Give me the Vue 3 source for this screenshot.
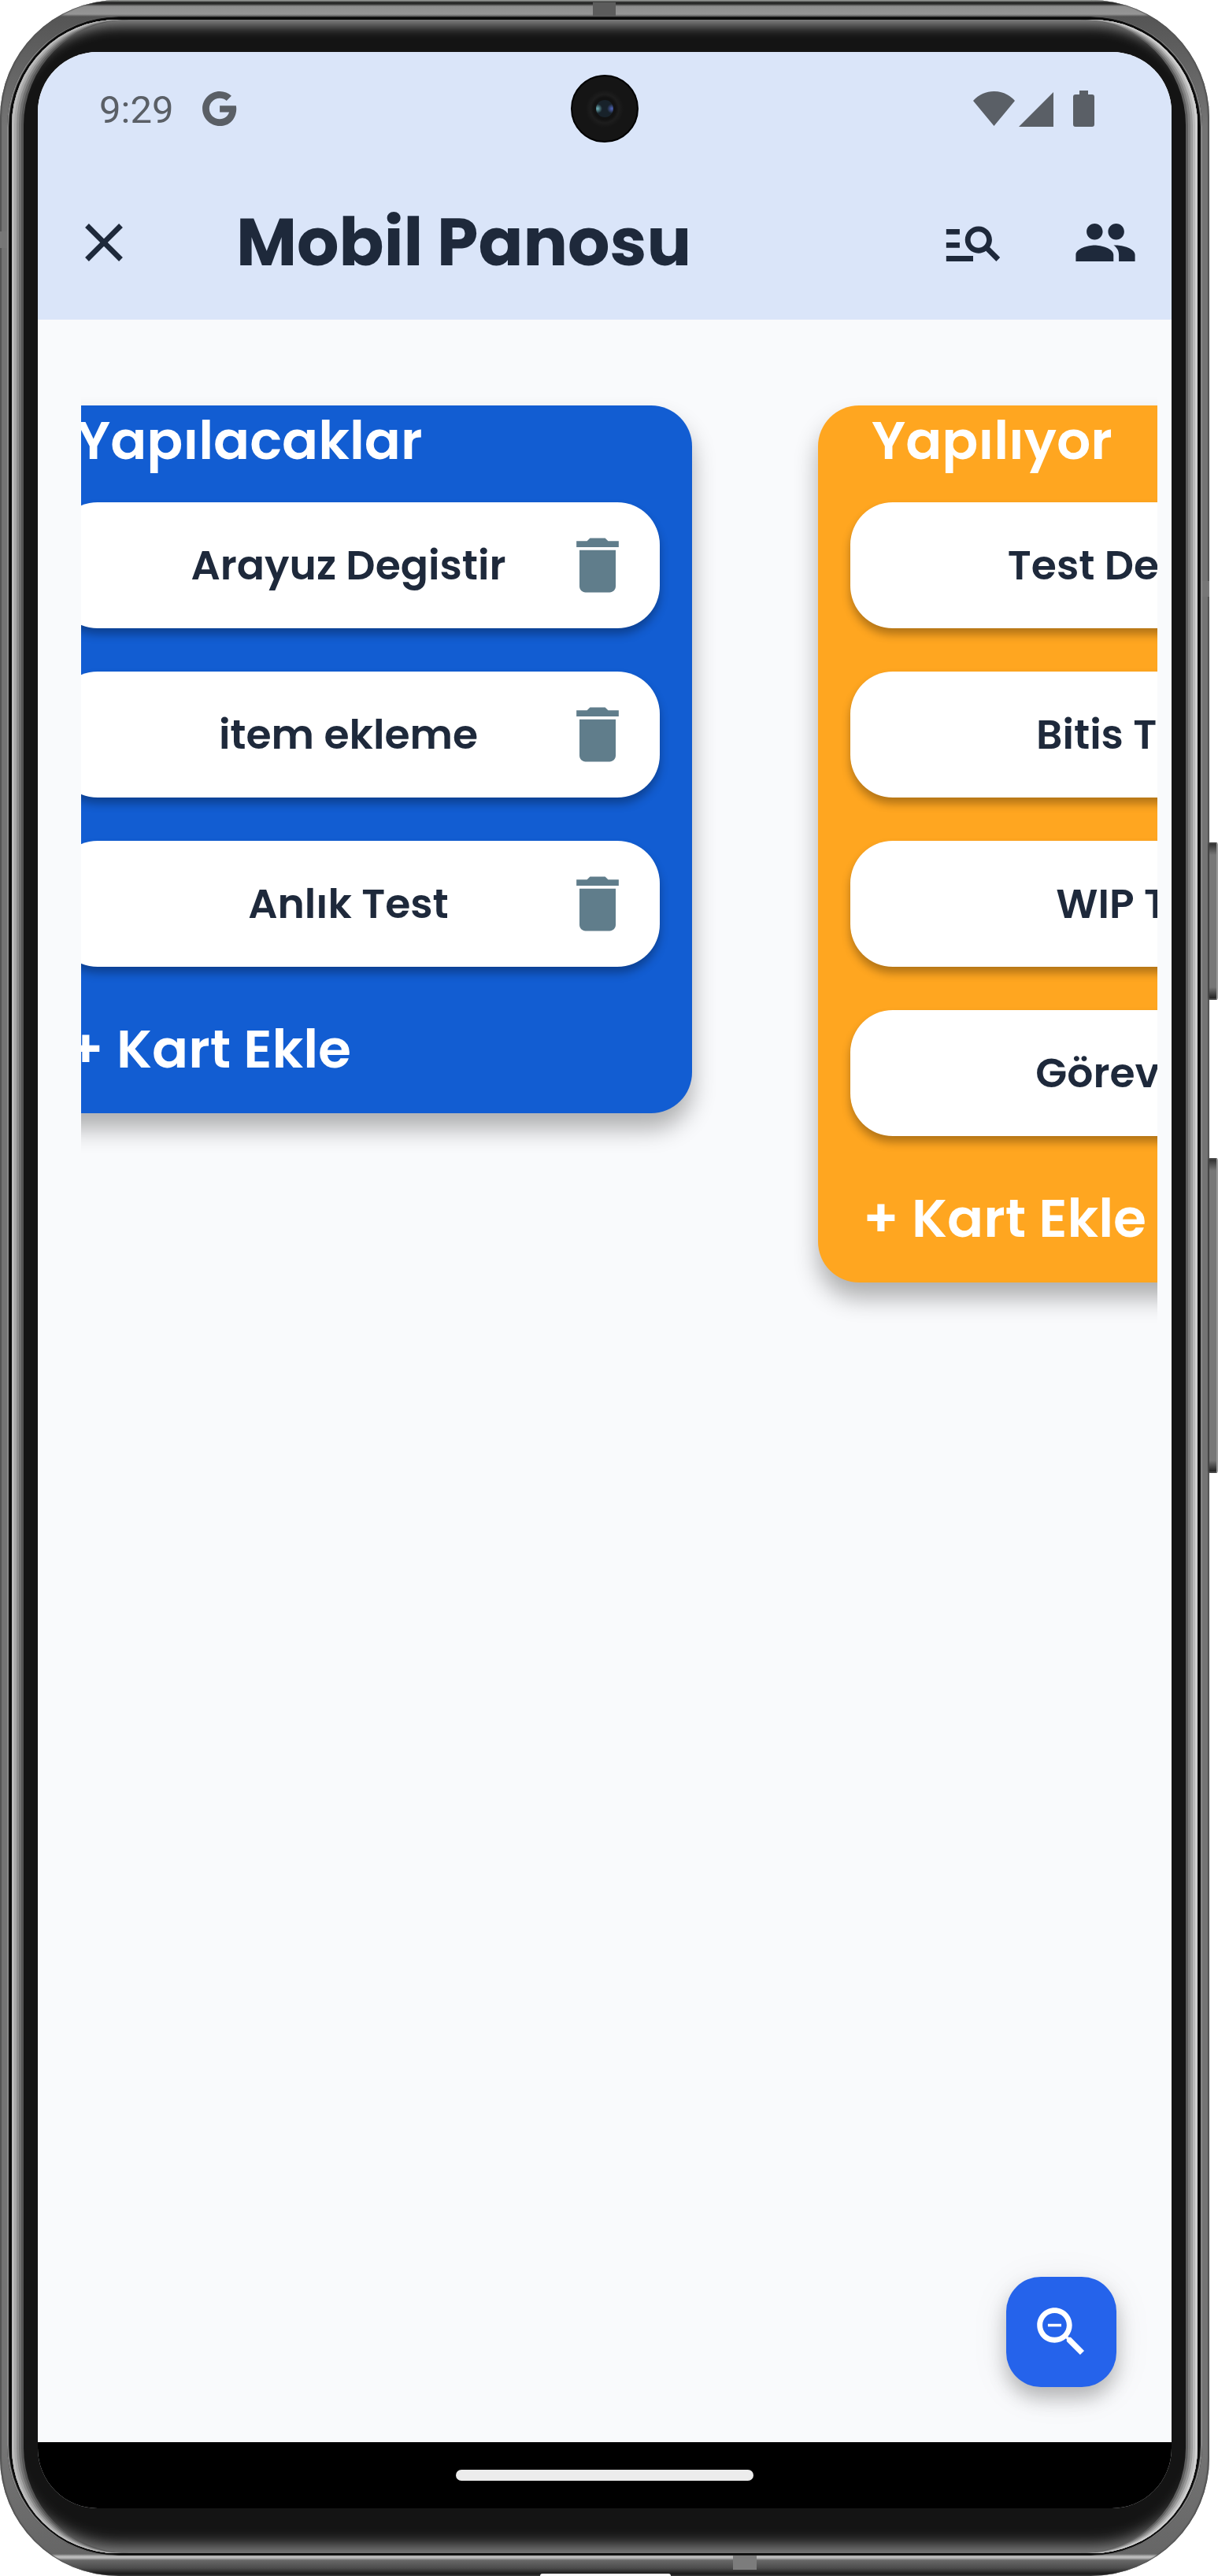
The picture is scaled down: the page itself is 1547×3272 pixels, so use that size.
<script setup>
import { onMounted, ref } from 'vue'

const icons = {
  close: 'M19 6.41 17.59 5 12 10.59 6.41 5 5 6.41 10.59 12 5 17.59 6.41 19 12 13.41 17.59 19 19 17.59 13.41 12z',
  search: 'M7 9H2V7h5v2zm0 3H2v2h5v-2zm13.59 7-3.83-3.83c-.8.52-1.74.83-2.76.83-2.76 0-5-2.24-5-5s2.24-5 5-5 5 2.24 5 5c0 1.02-.31 1.96-.83 2.75L22 17.59 20.59 19zM17 11c0-1.65-1.35-3-3-3s-3 1.35-3 3 1.35 3 3 3 3-1.35 3-3zM2 19h10v-2H2v2z',
  people: 'M16 11c1.66 0 2.99-1.34 2.99-3S17.66 5 16 5c-1.66 0-3 1.34-3 3s1.34 3 3 3zm-8 0c1.66 0 2.99-1.34 2.99-3S9.66 5 8 5C6.34 5 5 6.34 5 8s1.34 3 3 3zm0 2c-2.33 0-7 1.17-7 3.5V19h14v-2.5c0-2.33-4.67-3.5-7-3.5zm8 0c-.29 0-.62.02-.97.05 1.16.84 1.97 1.97 1.97 3.45V19h6v-2.5c0-2.33-4.67-3.5-7-3.5z',
  trash: 'M6 19c0 1.1.9 2 2 2h8c1.1 0 2-.9 2-2V7H6v12zM19 4h-3.5l-1-1h-5l-1 1H5v2h14V4z',
  zoomOut: 'M15.5 14h-.79l-.28-.27C15.41 12.59 16 11.11 16 9.5 16 5.91 13.09 3 9.5 3S3 5.91 3 9.5 5.91 16 9.5 16c1.61 0 3.09-.59 4.23-1.57l.27.28v.79l5 4.99L20.49 19l-4.99-5zm-6 0C7.01 14 5 11.99 5 9.5S7.01 5 9.5 5 14 7.01 14 9.5 11.99 14 9.5 14zM7 9h5v1H7z'
}

const lists = [
  { title: 'Yapılacaklar', tone: 'blue', cards: ['Arayuz Degistir', 'item ekleme', 'Anlık Test'] },
  { title: 'Yapılıyor', tone: 'orange', cards: ['Test Deneme', 'Bitis Tarihi', 'WIP Test', 'Görev Ekle'] }
]

const board = ref(null)
onMounted(() => {
  board.value.scrollLeft = 74
})
</script>

<template>
  <div class="stage">
    <div class="phone">
      <i class="key power"></i>
      <i class="key volume"></i>
      <i class="antenna top"></i>
      <i class="antenna left"></i>
      <i class="antenna right"></i>
      <i class="antenna bottom"></i>
      <i class="port"></i>
      <div class="groove">
        <div class="glass">
          <div class="screen">
            <header class="header">
              <div class="status">
                <time>9:29</time>
                <svg class="g-mark" viewBox="2.5 2 20 20"><path d="M12.545 10.239v3.821h5.445c-.712 2.315-2.647 3.972-5.445 3.972-3.332 0-6.033-2.701-6.033-6.032s2.701-6.032 6.033-6.032c1.498 0 2.866.549 3.921 1.453l2.814-2.814C17.503 2.988 15.139 2 12.545 2 7.021 2 2.543 6.477 2.543 12s4.478 10 10.002 10c8.396 0 10.249-7.85 9.426-11.748l-9.426-.013z" /></svg>
                <svg class="signals" viewBox="0 0 154 46">
                  <path d="M0 13C14-3 39-3 53 13L26.500 45zM58 46 102 2V46zM135 0h11v5h5q3 0 3 3v35q0 3-3 3h-21q-3 0-3-3V8q0-3 3-3h5z" />
                </svg>
                <span class="camera"><i></i></span>
              </div>
              <div class="appbar">
                <button class="icon-btn" aria-label="Kapat"><svg viewBox="0 0 24 24"><path :d="icons.close" /></svg></button>
                <h1>Mobil Panosu</h1>
                <button class="icon-btn" aria-label="Ara"><svg viewBox="0 0 24 24"><path :d="icons.search" /></svg></button>
                <button class="icon-btn" aria-label="Üyeler"><svg viewBox="0 0 24 24"><path :d="icons.people" /></svg></button>
              </div>
            </header>

            <main class="content">
              <div ref="board" class="board">
                <section v-for="list in lists" :key="list.title" class="list" :class="list.tone">
                  <h2>{{ list.title }}</h2>
                  <ul>
                    <li v-for="card in list.cards" :key="card">
                      <span>{{ card }}</span>
                      <button aria-label="Sil"><svg viewBox="0 0 24 24"><path :d="icons.trash" /></svg></button>
                    </li>
                  </ul>
                  <button class="add">+ Kart Ekle</button>
                </section>
              </div>
              <button class="fab" aria-label="Uzaklaştır"><svg viewBox="0 0 24 24"><path :d="icons.zoomOut" /></svg></button>
            </main>

            <nav class="gesture"><i></i></nav>
          </div>
        </div>
      </div>
    </div>
  </div>
</template>

<style>
body {
  margin: 0;
  background: #fff;
}
</style>

<style scoped>
* {
  box-sizing: border-box;
}
.stage {
  display: flex;
  min-height: 100vh;
  padding-right: 11px;
  font-family: Poppins, Inter, sans-serif;
  color: #1e293b;
}
button {
  padding: 0;
  border: 0;
  background: none;
  color: inherit;
  font: inherit;
  cursor: pointer;
}
svg {
  display: block;
  fill: currentColor;
}

/* Phone body */
.phone {
  position: relative;
  display: flex;
  flex: 1;
  min-width: 0;
  padding: 21px 9px 26px;
  border-radius: 150px;
  background: linear-gradient(to bottom, #b9bdb9 0, #242424 3px, #2c2c2c 5px, #8d8d8d 8px, #969696 18px, #555 21px, #747474 160px, #747474 calc(100% - 160px), #666 calc(100% - 28px), #bbb calc(100% - 25px), #bbb calc(100% - 23px), #686868 calc(100% - 20px), #4c4c4c calc(100% - 10px), #1b1b1b calc(100% - 3px), #333 100%);
  box-shadow: inset 2px 0 1px #555, inset -2px 0 1px #555;
}
.groove {
  display: flex;
  flex: 1;
  min-width: 0;
  padding: 4px 6px 3px;
  border-radius: 140px;
  background: #0b0b0b;
  box-shadow: inset 2px 0 1px #8c8c8c, inset -2px 0 1px #8c8c8c;
}
.glass {
  display: flex;
  flex: 1;
  min-width: 0;
  padding: 41px 33px 57px;
  border-radius: 134px;
  background: #141414;
  box-shadow: inset 3px 0 #bcbcbc, inset -3px 0 #cfcfcf, inset 6px 0 #a8a8a8, inset -6px 0 #b9b9b9,
    inset 9px 0 #8c8c8c, inset -9px 0 #9b9b9b, inset 12px 0 #707070, inset -12px 0 #808080,
    inset 15px 0 #555, inset -15px 0 #5f5f5f, inset 0 14px 16px -6px #8c8c8c, inset 0 -18px 20px -8px #868686;
}
.key {
  position: absolute;
  right: -11px;
  width: 13px;
  border-radius: 3px;
  border: 2px solid #444;
  border-right-color: #999;
  background: linear-gradient(#333, #777 14px, #777 calc(100% - 14px), #222);
}
.power {
  top: 1070px;
  height: 200px;
}
.volume {
  top: 1471px;
  height: 400px;
}
.antenna {
  position: absolute;
  background: #5c5c5c;
}
.antenna.top {
  top: 3px;
  left: calc(50% - 15px);
  width: 29px;
  height: 18px;
}
.antenna.left {
  top: 294px;
  left: 0;
  width: 9px;
  height: 21px;
  background: #777;
}
.antenna.right {
  top: 738px;
  right: 0;
  width: 9px;
  height: 20px;
  background: #777;
}
.antenna.bottom {
  bottom: 8px;
  left: calc(50% + 163px);
  width: 30px;
  height: 18px;
  background: #7c7c7c;
}
.port {
  position: absolute;
  bottom: 0;
  left: calc(50% - 82px);
  width: 166px;
  height: 3px;
  border-radius: 20px 20px 0 0;
  background: #fff;
}

/* Screen */
.screen {
  display: flex;
  flex: 1;
  flex-direction: column;
  min-width: 0;
  overflow: hidden;
  border-radius: 76px;
  background: #f9fafc;
}
.header {
  background: #dae5f9;
}
.status {
  position: relative;
  display: flex;
  align-items: center;
  height: 144px;
  padding: 0 98px 0 78px;
  color: #5a5f66;
  font: 400 49px/60px Roboto, sans-serif;
}
.status time {
  padding-top: 4px;
}
.g-mark {
  width: 44px;
  height: 44px;
  margin-left: 37px;
}
.signals {
  width: 154px;
  height: 46px;
  margin-left: auto;
}
.camera {
  position: absolute;
  top: 29px;
  left: calc(50% - 43px);
  display: grid;
  place-items: center;
  width: 86px;
  height: 86px;
  border: 2px solid #000;
  border-radius: 50%;
  background: radial-gradient(circle, #121212 0 14px, #1d1d1d 18px, #151515 24px);
}
.camera i {
  width: 22px;
  height: 22px;
  border-radius: 50%;
  background: radial-gradient(circle at 2px 11px, #6fb2b8 0, #6fb2b800 6px), radial-gradient(circle at 20px 11px, #5064b8 0, #5064b800 6px), #18222a;
}
.appbar {
  display: flex;
  align-items: center;
  height: 196px;
}
.icon-btn {
  display: grid;
  place-items: center;
  flex: none;
  width: 168px;
  height: 168px;
}
.icon-btn svg,
.fab svg {
  width: 82px;
  height: 82px;
}
h1 {
  flex: 1;
  margin: 0 0 0 84px;
  font-size: 84px;
  font-weight: 700;
  line-height: 110px;
  white-space: nowrap;
}

/* Board */
.content {
  position: relative;
  display: flex;
  flex: 1;
  padding: 0 18px 0 55px;
}
.board {
  display: flex;
  flex: 1;
  align-items: flex-start;
  gap: 160px;
  min-width: 0;
  padding-top: 109px;
  overflow-x: auto;
  overflow-y: hidden;
  scrollbar-width: none;
}
.list {
  flex: none;
  width: 850px;
  padding: 0 41px 36px;
  border-radius: 52px;
  box-shadow: 0 20px 30px rgba(0, 0, 0, 0.3);
}
.blue {
  background: #125dd2;
}
.orange {
  background: #ffa620;
}
h2,
.add {
  display: block;
  margin: 0;
  color: #fff;
  font-size: 68px;
  font-weight: 600;
  line-height: 90px;
  white-space: nowrap;
}
h2 {
  padding-left: 27px;
}
.add {
  margin-top: 60px;
  padding-left: 16px;
}
ul {
  display: grid;
  gap: 55px;
  margin: 33px 0 0;
  padding: 0;
  list-style: none;
}
li {
  display: flex;
  align-items: center;
  height: 160px;
  padding-left: 135px;
  border-radius: 54px;
  background: #fff;
  box-shadow: 0 8px 12px rgba(0, 0, 0, 0.3);
}
li span {
  flex: 1;
  font-size: 52px;
  font-weight: 600;
  line-height: 70px;
  text-align: center;
  white-space: nowrap;
}
li button {
  display: grid;
  place-items: center;
  width: 158px;
  height: 160px;
  color: #607d8b;
}
li svg {
  width: 92px;
  height: 92px;
}
.fab {
  position: absolute;
  right: 70px;
  bottom: 70px;
  display: grid;
  place-items: center;
  width: 140px;
  height: 140px;
  border-radius: 44px;
  background: #2563eb;
  color: #fff;
  box-shadow: 0 14px 24px rgba(0, 0, 0, 0.24), 0 8px 50px rgba(0, 0, 0, 0.08);
}
.gesture {
  display: grid;
  place-items: center;
  height: 84px;
  background: #000;
}
.gesture i {
  width: 378px;
  height: 14px;
  border-radius: 7px;
  background: #ececec;
}
</style>
